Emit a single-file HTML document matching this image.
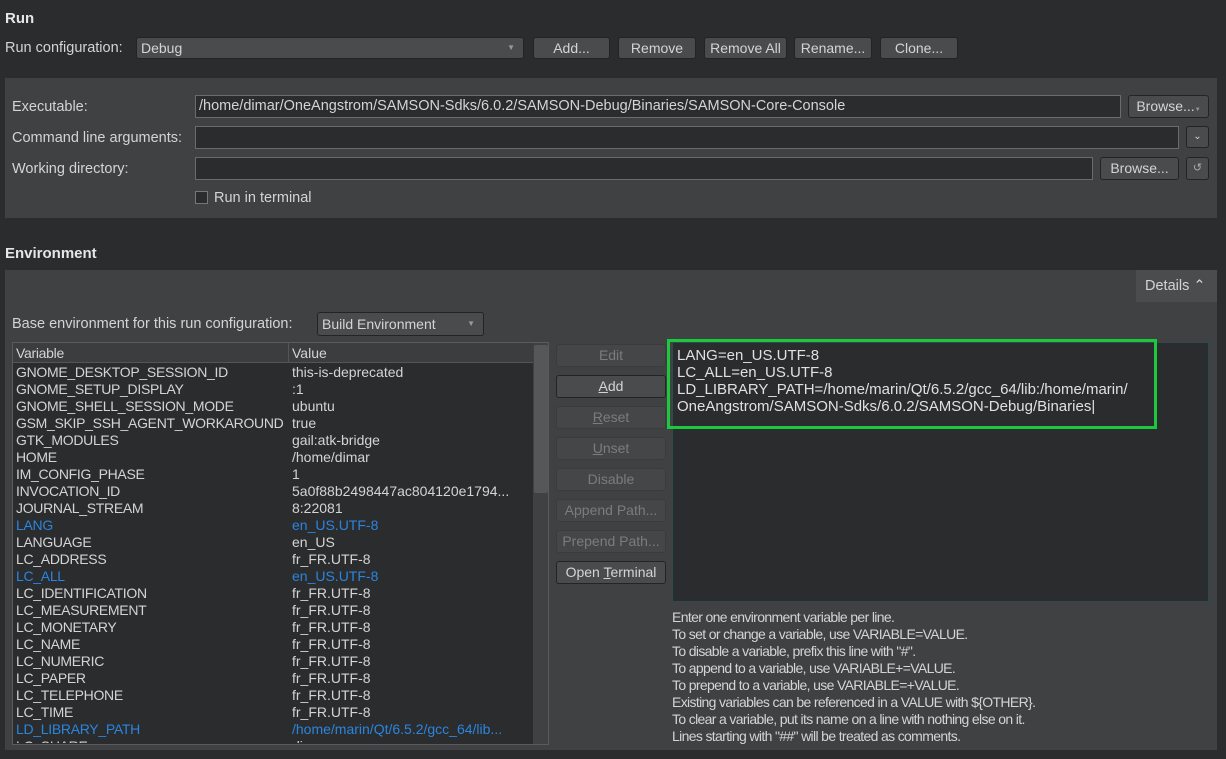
<!DOCTYPE html>
<html><head><meta charset="utf-8"><style>
*{box-sizing:border-box;margin:0;padding:0}
body{width:1226px;height:759px;background:#2b2c2e;font-family:"Liberation Sans",sans-serif;font-size:14.5px;color:#d4d4d4;position:relative;overflow:hidden}
.a{position:absolute;white-space:nowrap}
.b{position:absolute;background:#4a4b4d;border:1px solid #232425;border-radius:3px;text-align:center;color:#d4d4d4;line-height:20px;font-size:14px}
.d{color:#7b7c7d;background:#454647;border-color:#3a3b3c}
.i{position:absolute;background:#2b2c2e;border:1px solid #6a6b6c}
.p{position:absolute;background:#404142}
.h{font-weight:bold;font-size:15px;color:#e6e6e6}
.r{position:absolute;left:16px;height:17px;line-height:17px;white-space:nowrap;font-size:14px;letter-spacing:-0.3px}
.v{position:absolute;left:292px;height:17px;line-height:17px;white-space:nowrap;font-size:14px}
.bl{color:#2b85de}
</style></head><body>
<div class="a h" style="left:5px;top:10px">Run</div>
<div class="a" style="left:5px;top:40px">Run configuration:</div>
<div class="b" style="left:136px;top:37px;width:388px;height:22px;text-align:left;padding-left:4px">Debug<span style="position:absolute;right:8px;top:0;font-size:8px;color:#999">▼</span></div>
<div class="b" style="left:533px;top:37px;width:77px;height:22px">Add...</div>
<div class="b" style="left:618px;top:37px;width:78px;height:22px">Remove</div>
<div class="b" style="left:704px;top:37px;width:83px;height:22px">Remove All</div>
<div class="b" style="left:794px;top:37px;width:78px;height:22px">Rename...</div>
<div class="b" style="left:880px;top:37px;width:78px;height:22px">Clone...</div>

<div class="p" style="left:5px;top:78px;width:1212px;height:140px"></div>
<div class="a" style="left:12px;top:99px">Executable:</div>
<div class="a" style="left:12px;top:130px">Command line arguments:</div>
<div class="a" style="left:12px;top:161px">Working directory:</div>
<div class="i" style="left:195px;top:95px;width:926px;height:23px;padding-left:3px;line-height:21px">/home/dimar/OneAngstrom/SAMSON-Sdks/6.0.2/SAMSON-Debug/Binaries/SAMSON-Core-Console</div>
<div class="b" style="left:1128px;top:95px;width:81px;height:23px">Browse...<span style="font-size:6px;color:#999">▼</span></div>
<div class="i" style="left:195px;top:126px;width:984px;height:23px"></div>
<div class="b" style="left:1186px;top:126px;width:23px;height:22px;font-size:10px">&#8964;</div>
<div class="i" style="left:195px;top:157px;width:898px;height:23px"></div>
<div class="b" style="left:1100px;top:157px;width:79px;height:23px">Browse...</div>
<div class="b" style="left:1186px;top:157px;width:23px;height:23px;font-size:11px;color:#aaa">↺</div>
<div class="a" style="left:195px;top:191px;width:13px;height:13px;border:1px solid #777;background:#2b2c2e"></div>
<div class="a" style="left:214px;top:190px">Run in terminal</div>

<div class="a h" style="left:5px;top:245px">Environment</div>
<div class="p" style="left:5px;top:270px;width:1212px;height:480px"></div>
<div class="a" style="left:1136px;top:270px;width:81px;height:32px;background:#4b4c4d;line-height:32px;padding-left:9px">Details &#8963;</div>
<div class="a" style="left:12px;top:316px">Base environment for this run configuration:</div>
<div class="b" style="left:317px;top:312px;width:167px;height:24px;text-align:left;padding-left:4px;line-height:22px">Build Environment<span style="position:absolute;right:8px;top:0;font-size:8px;color:#999">▼</span></div>

<div class="i" style="left:12px;top:342px;width:537px;height:403px;overflow:hidden;border-color:#5a5b5c">
<div style="position:absolute;left:0;top:0;width:520px;height:20px;background:#3c3d3e;border-bottom:1px solid #555"></div>
<div style="position:absolute;left:275px;top:0;width:1px;height:20px;background:#555"></div>
<div style="position:absolute;left:520px;top:0;width:16px;height:402px;background:#404142"></div>
<div style="position:absolute;left:521px;top:2px;width:14px;height:148px;background:#565758;border-radius:2px"></div>
</div>
<div style="position:absolute;left:13px;top:344px;width:520px;height:399px;overflow:hidden">
<div class="r" style="left:3px;top:1px">Variable</div><div class="v" style="left:279px;top:1px">Value</div>
<div class="r" style="left:3px;top:20px">GNOME_DESKTOP_SESSION_ID</div><div class="v" style="left:279px;top:20px">this-is-deprecated</div>
<div class="r" style="left:3px;top:37px">GNOME_SETUP_DISPLAY</div><div class="v" style="left:279px;top:37px">:1</div>
<div class="r" style="left:3px;top:54px">GNOME_SHELL_SESSION_MODE</div><div class="v" style="left:279px;top:54px">ubuntu</div>
<div class="r" style="left:3px;top:71px">GSM_SKIP_SSH_AGENT_WORKAROUND</div><div class="v" style="left:279px;top:71px">true</div>
<div class="r" style="left:3px;top:88px">GTK_MODULES</div><div class="v" style="left:279px;top:88px">gail:atk-bridge</div>
<div class="r" style="left:3px;top:105px">HOME</div><div class="v" style="left:279px;top:105px">/home/dimar</div>
<div class="r" style="left:3px;top:122px">IM_CONFIG_PHASE</div><div class="v" style="left:279px;top:122px">1</div>
<div class="r" style="left:3px;top:139px">INVOCATION_ID</div><div class="v" style="left:279px;top:139px">5a0f88b2498447ac804120e1794...</div>
<div class="r" style="left:3px;top:156px">JOURNAL_STREAM</div><div class="v" style="left:279px;top:156px">8:22081</div>
<div class="r bl" style="left:3px;top:173px">LANG</div><div class="v bl" style="left:279px;top:173px">en_US.UTF-8</div>
<div class="r" style="left:3px;top:190px">LANGUAGE</div><div class="v" style="left:279px;top:190px">en_US</div>
<div class="r" style="left:3px;top:207px">LC_ADDRESS</div><div class="v" style="left:279px;top:207px">fr_FR.UTF-8</div>
<div class="r bl" style="left:3px;top:224px">LC_ALL</div><div class="v bl" style="left:279px;top:224px">en_US.UTF-8</div>
<div class="r" style="left:3px;top:241px">LC_IDENTIFICATION</div><div class="v" style="left:279px;top:241px">fr_FR.UTF-8</div>
<div class="r" style="left:3px;top:258px">LC_MEASUREMENT</div><div class="v" style="left:279px;top:258px">fr_FR.UTF-8</div>
<div class="r" style="left:3px;top:275px">LC_MONETARY</div><div class="v" style="left:279px;top:275px">fr_FR.UTF-8</div>
<div class="r" style="left:3px;top:292px">LC_NAME</div><div class="v" style="left:279px;top:292px">fr_FR.UTF-8</div>
<div class="r" style="left:3px;top:309px">LC_NUMERIC</div><div class="v" style="left:279px;top:309px">fr_FR.UTF-8</div>
<div class="r" style="left:3px;top:326px">LC_PAPER</div><div class="v" style="left:279px;top:326px">fr_FR.UTF-8</div>
<div class="r" style="left:3px;top:343px">LC_TELEPHONE</div><div class="v" style="left:279px;top:343px">fr_FR.UTF-8</div>
<div class="r" style="left:3px;top:360px">LC_TIME</div><div class="v" style="left:279px;top:360px">fr_FR.UTF-8</div>
<div class="r bl" style="left:3px;top:377px">LD_LIBRARY_PATH</div><div class="v bl" style="left:279px;top:377px">/home/marin/Qt/6.5.2/gcc_64/lib...</div>
<div class="r" style="left:3px;top:394px">LC_SHARE</div><div class="v" style="left:279px;top:394px">dim</div>
</div>

<div class="b d" style="left:556px;top:344px;width:110px;height:23px">Edit</div>
<div class="b" style="left:556px;top:375px;width:110px;height:23px"><u>A</u>dd</div>
<div class="b d" style="left:556px;top:406px;width:110px;height:23px"><u>R</u>eset</div>
<div class="b d" style="left:556px;top:437px;width:110px;height:23px"><u>U</u>nset</div>
<div class="b d" style="left:556px;top:468px;width:110px;height:23px">Disable</div>
<div class="b d" style="left:556px;top:499px;width:110px;height:23px">Append Path...</div>
<div class="b d" style="left:556px;top:530px;width:110px;height:23px">Prepend Path...</div>
<div class="b" style="left:556px;top:561px;width:110px;height:23px">Open <u>T</u>erminal</div>

<div class="a" style="left:672px;top:342px;width:537px;height:260px;background:#2b2c2e;border:1px solid #2f4a4a"></div>
<div class="a" style="left:667px;top:339px;width:490px;height:90px;border:3px solid #1ec83e"></div>
<div class="a" style="left:677px;top:347px;line-height:17px;color:#e0e0e0;font-size:15px">LANG=en_US.UTF-8<br>LC_ALL=en_US.UTF-8<br>LD_LIBRARY_PATH=/home/marin/Qt/6.5.2/gcc_64/lib:/home/marin/<br>OneAngstrom/SAMSON-Sdks/6.0.2/SAMSON-Debug/Binaries|</div>

<div class="a" style="left:672px;top:609px;line-height:17px;font-size:14px;letter-spacing:-0.65px">Enter one environment variable per line.<br>To set or change a variable, use VARIABLE=VALUE.<br>To disable a variable, prefix this line with "#".<br>To append to a variable, use VARIABLE+=VALUE.<br>To prepend to a variable, use VARIABLE=+VALUE.<br>Existing variables can be referenced in a VALUE with ${OTHER}.<br>To clear a variable, put its name on a line with nothing else on it.<br>Lines starting with "##" will be treated as comments.</div>
</body></html>
